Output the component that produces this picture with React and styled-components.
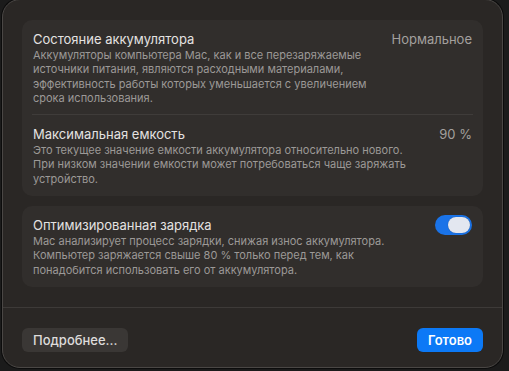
import React, { useState } from "react";
import styled, { createGlobalStyle } from "styled-components";

const GlobalStyle = createGlobalStyle`
  html, body {
    margin: 0;
    padding: 0;
    background: #1b1b1b;
    font-family: Inter, "Noto Sans", "Liberation Sans", sans-serif;
    -webkit-font-smoothing: antialiased;
  }
`;

const Screen = styled.div`
  width: 509px;
  height: 371px;
  padding: 0 6px 2px 2px;
  box-sizing: border-box;
  overflow: hidden;
`;

const Dialog = styled.div`
  height: 369px;
  box-sizing: border-box;
  margin-top: -1px;
  background: #2a2725;
  border: 1px solid #4a4745;
  border-radius: 18px;
  box-shadow: 0 0 0 1px #0c0c0c;
  display: flex;
  flex-direction: column;
`;

const Content = styled.div`
  padding: 20px 19px 20px;
  display: flex;
  flex-direction: column;
  gap: 10px;
  border-bottom: 1px solid #3d3a38;
`;

const Group = styled.section`
  background: #312e2c;
  border-radius: 10px;
  padding: 0 10px;
`;

const Row = styled.div`
  display: flex;
  align-items: flex-start;
  gap: 16px;
  padding: 11px 0 ${(props) => (props.last ? "10px" : "9px")};
  border-top: ${(props) => (props.first ? "none" : "1px solid #3f3c3a")};
`;

const RowText = styled.div`
  flex: 1;
  display: flex;
  flex-direction: column;
`;

const Title = styled.div`
  font-size: 13px;
  line-height: 16px;
  color: #e4e2e1;
  padding-left: 1px;
`;

const Description = styled.div`
  font-size: 11px;
  line-height: 14.3px;
  color: #9c9997;
  padding-left: 1px;
  margin-top: 1px;
`;

const Value = styled.div`
  font-size: 13px;
  line-height: 16px;
  color: #a3a09e;
  padding-right: 1px;
`;

const Switch = styled.button`
  width: 37px;
  height: 20px;
  margin-top: -2px;
  margin-right: 1px;
  border: none;
  border-radius: 10px;
  padding: 2px;
  background: ${(props) => (props.on ? "#1a73e8" : "#4a4745")};
  display: flex;
  justify-content: ${(props) => (props.on ? "flex-end" : "flex-start")};
  cursor: pointer;
`;

const Knob = styled.span`
  width: 22px;
  height: 16px;
  border-radius: 8px;
  background: #e3e7f0;
  box-shadow: 0 0 1px rgba(0, 0, 0, 0.4);
`;

const Footer = styled.div`
  display: flex;
  justify-content: space-between;
  align-items: center;
  padding: 20px 19px 0;
`;

const Button = styled.button`
  height: 24px;
  border: none;
  border-radius: 6px;
  font-family: inherit;
  font-size: 13px;
  font-weight: ${(props) => (props.primary ? 600 : 500)};
  padding: 0 ${(props) => (props.primary ? "11px" : "11px")};
  color: ${(props) => (props.primary ? "#ffffff" : "#dedcdb")};
  background: ${(props) => (props.primary ? "#0c79f6" : "#3a3735")};
  cursor: pointer;
`;

const Lines = ({ lines }) =>
  lines.map((line, i) => (
    <React.Fragment key={i}>
      {line}
      {i < lines.length - 1 && <br />}
    </React.Fragment>
  ));

const batteryRows = [
  {
    title: "Состояние аккумулятора",
    value: "Нормальное",
    lines: [
      "Аккумуляторы компьютера Mac, как и все перезаряжаемые",
      "источники питания, являются расходными материалами,",
      "эффективность работы которых уменьшается с увеличением",
      "срока использования.",
    ],
  },
  {
    title: "Максимальная емкость",
    value: "90 %",
    lines: [
      "Это текущее значение емкости аккумулятора относительно нового.",
      "При низком значении емкости может потребоваться чаще заряжать",
      "устройство.",
    ],
  },
];

export default function App() {
  const [optimized, setOptimized] = useState(true);

  return (
    <Screen>
      <GlobalStyle />
      <Dialog>
        <Content>
          <Group>
            {batteryRows.map((row, index) => (
              <Row
                key={row.title}
                first={index === 0}
                last={index === batteryRows.length - 1}
              >
                <RowText>
                  <Title>{row.title}</Title>
                  <Description>
                    <Lines lines={row.lines} />
                  </Description>
                </RowText>
                <Value>{row.value}</Value>
              </Row>
            ))}
          </Group>

          <Group>
            <Row first last>
              <RowText>
                <Title>Оптимизированная зарядка</Title>
                <Description>
                  <Lines
                    lines={[
                      "Mac анализирует процесс зарядки, снижая износ аккумулятора.",
                      "Компьютер заряжается свыше 80 % только перед тем, как",
                      "понадобится использовать его от аккумулятора.",
                    ]}
                  />
                </Description>
              </RowText>
              <Switch on={optimized} onClick={() => setOptimized(!optimized)}>
                <Knob />
              </Switch>
            </Row>
          </Group>
        </Content>

        <Footer>
          <Button>Подробнее...</Button>
          <Button primary>Готово</Button>
        </Footer>
      </Dialog>
    </Screen>
  );
}
